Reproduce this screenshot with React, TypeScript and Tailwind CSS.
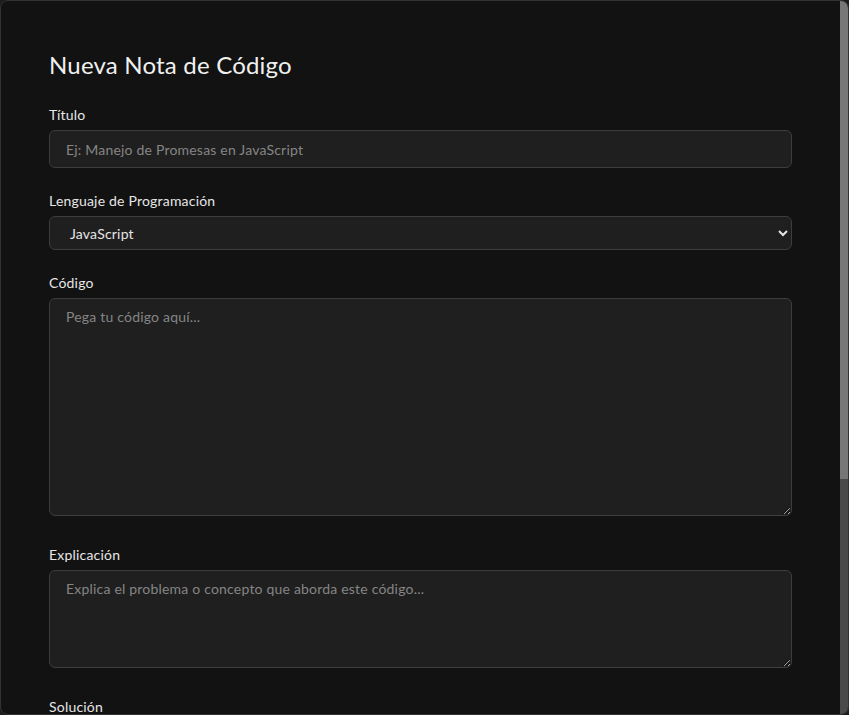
import { useState } from 'react';

const fieldLabel = "block text-sm leading-5 tracking-[0.2px] font-normal text-[#e6e6e6] mb-[5px]";
const fieldBox =
  "block w-full bg-[#1f1f1f] border border-[#3d3d3d] rounded-md text-sm tracking-[0.2px] text-[#e5e5e5] placeholder:text-[#858585] outline-none focus:border-[#5a5a5a]";

export default function App() {
  const [lang, setLang] = useState('javascript');

  return (
    <div className="w-[849px] h-[715px] bg-[#1c1c1c] font-['Lato',sans-serif] [color-scheme:dark]">
      <div className="h-full flex border border-[#333] rounded-lg bg-[#121212] overflow-hidden">
        <form className="flex-1 min-w-0 px-12 pt-12 overflow-hidden" onSubmit={(e) => e.preventDefault()}>
          <h2 className="text-2xl leading-8 tracking-[0.2px] font-normal text-[#f0f0f0] mb-6">Nueva Nota de Código</h2>

          {/* Título */}
          <div className="mb-[23px]">
            <label className={fieldLabel}>Título</label>
            <input
              type="text"
              className={`${fieldBox} h-[38px] px-4`}
              placeholder="Ej: Manejo de Promesas en JavaScript"
            />
          </div>

          {/* Lenguaje */}
          <div className="mb-[23px]">
            <label className={fieldLabel}>Lenguaje de Programación</label>
            <select
              value={lang}
              onChange={(e) => setLang(e.target.value)}
              className={`${fieldBox} h-[34px] px-4`}
            >
              <option value="javascript">JavaScript</option>
              <option value="typescript">TypeScript</option>
              <option value="python">Python</option>
              <option value="java">Java</option>
              <option value="csharp">C#</option>
            </select>
          </div>

          {/* Código */}
          <div className="mb-[29px]">
            <label className={fieldLabel}>Código</label>
            <textarea
              className={`${fieldBox} h-[218px] px-4 py-2 leading-5`}
              placeholder="Pega tu código aquí..."
            />
          </div>

          {/* Explicación */}
          <div className="mb-[29px]">
            <label className={fieldLabel}>Explicación</label>
            <textarea
              className={`${fieldBox} h-[98px] px-4 py-2 leading-5`}
              placeholder="Explica el problema o concepto que aborda este código..."
            />
          </div>

          {/* Solución (continues below the fold) */}
          <div>
            <label className={fieldLabel}>Solución</label>
            <textarea className={`${fieldBox} h-[98px] px-4 py-2 leading-5`} />
          </div>
        </form>

        {/* scrollbar as drawn in the screenshot */}
        <div className="w-2 shrink-0 flex flex-col">
          <div className="h-[478px] bg-[#777]" />
          <div className="flex-1 bg-[#4a4a4a]" />
        </div>
      </div>
    </div>
  );
}
